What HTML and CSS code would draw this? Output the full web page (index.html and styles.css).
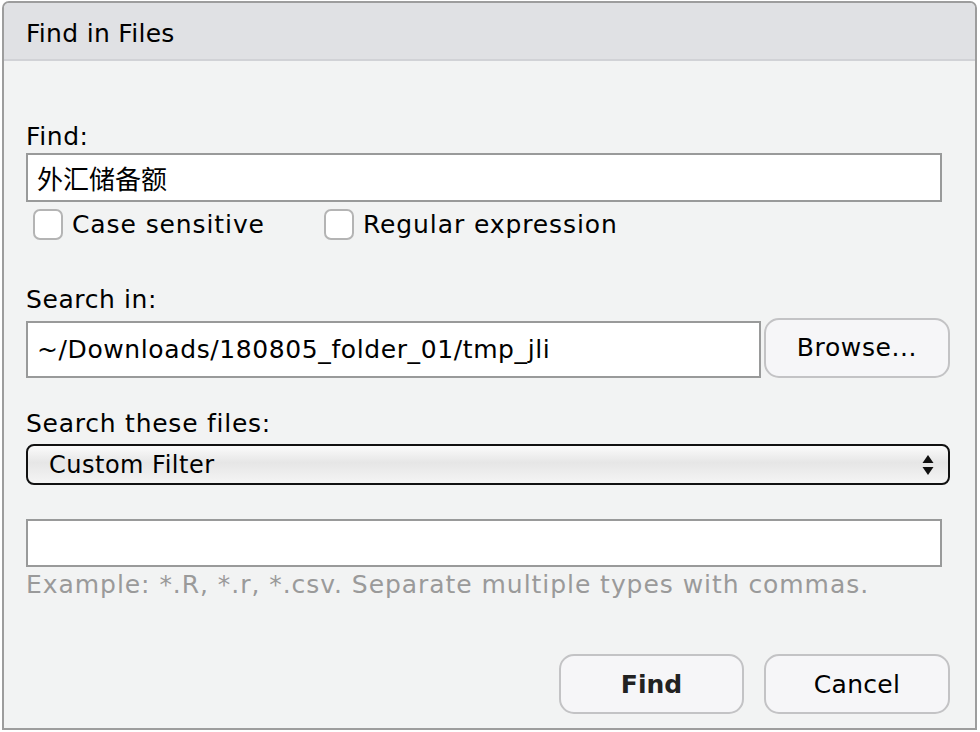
FILE: index.html
```html
<!DOCTYPE html>
<html>
<head>
<meta charset="utf-8">
<link rel="stylesheet" href="styles.css">
</head>
<body>
<div class="dialog">
  <div class="titlebar">Find in Files</div>
  <div class="content">
    <div class="label label-find">Find:</div>
    <div class="input input-find">外汇储备额</div>
    <div class="checks">
      <label class="check check-case"><span class="box"></span>Case sensitive</label>
      <label class="check"><span class="box"></span>Regular expression</label>
    </div>
    <div class="label label-search">Search in:</div>
    <div class="dir-row">
      <div class="input input-dir">~/Downloads/180805_folder_01/tmp_jli</div>
      <div class="btn btn-browse">Browse...</div>
    </div>
    <div class="label label-files">Search these files:</div>
    <div class="select">
      <span>Custom Filter</span>
      <svg class="arrows" width="12" height="22" viewBox="0 0 12 22"><path d="M6 1 L11.5 9 L0.5 9 Z M6 21 L11.5 13 L0.5 13 Z" fill="#111"/></svg>
    </div>
    <div class="input input-filter"></div>
    <div class="hint">Example: *.R, *.r, *.csv. Separate multiple types with commas.</div>
    <div class="actions">
      <div class="btn btn-find">Find</div>
      <div class="btn btn-cancel">Cancel</div>
    </div>
  </div>
</div>
</body>
</html>
```
FILE: styles.css
```css
html, body {
  margin: 0;
  padding: 0;
  background: #ffffff;
}
body {
  font-family: "DejaVu Sans", "Noto Sans CJK SC", sans-serif;
  font-size: 25px;
  color: #000;
  width: 980px;
  height: 732px;
  overflow: hidden;
  letter-spacing: 0.6px;
}
.dialog {
  margin: 1px 0 0 2px;
  width: 975px;
  height: 729px;
  box-sizing: border-box;
  border: 2px solid #9d9d9d;
  border-radius: 7px 7px 0 0;
  background: #f2f3f3;
  display: flex;
  flex-direction: column;
  overflow: hidden;
}
.titlebar {
  height: 58px;
  box-sizing: border-box;
  background: #e0e1e4;
  border-bottom: 2px solid #d1d2d6;
  padding: 16px 0 0 22px;
  font-size: 25px;
  line-height: 30px;
  letter-spacing: 0.3px;
}
.content {
  padding: 0 25px 0 22px;
  display: flex;
  flex-direction: column;
  flex: 1;
}
.label {
  line-height: 30px;
  height: 30px;
}
.label-find { margin-top: 61px; }
.label-files { letter-spacing: 0.75px; }
.input {
  background: #fff;
  border: 2px solid #999a9a;
  box-sizing: border-box;
  margin-right: 8px;
}
.input-find {
  margin-top: 1px;
  height: 49px;
  font-family: "Noto Sans CJK SC", sans-serif;
  font-size: 26px;
  line-height: 45px;
  padding-left: 9px;
  letter-spacing: 0;
}
.checks {
  display: flex;
  margin-top: 5px;
  height: 35px;
  align-items: center;
  padding-left: 7px;
  letter-spacing: 0.9px;
}
.check {
  display: flex;
  align-items: center;
}
.check-case { margin-right: 59px; }
.box {
  width: 30px;
  height: 31px;
  box-sizing: border-box;
  border: 2px solid #b4b4b4;
  border-radius: 7px;
  background: #fff;
  margin-right: 9px;
}
.label-search { margin-top: 43px; }
.dir-row {
  display: flex;
  margin-top: 3px;
  align-items: flex-end;
}
.input-dir {
  width: 735px;
  height: 57px;
  line-height: 53px;
  padding-left: 9px;
  margin-right: 3px;
}
.btn {
  box-sizing: border-box;
  border: 2px solid #c3c3c5;
  border-radius: 15px;
  background: #f6f6f8;
  display: flex;
  align-items: center;
  justify-content: center;
  height: 60px;
}
.btn-browse {
  width: 186px;
  padding-bottom: 2px;
}
.label-files { margin-top: 31px; }
.select {
  margin-top: 5px;
  height: 41px;
  box-sizing: border-box;
  border: 2px solid #111;
  border-radius: 8px;
  background: linear-gradient(#fbfbfb, #e6e6e6 45%, #f4f4f4);
  display: flex;
  align-items: center;
  justify-content: space-between;
  padding: 0 14px 0 21px;
  font-size: 24px;
  letter-spacing: 0.5px;
}
.arrows { display: block; }
.input-filter {
  margin-top: 34px;
  height: 48px;
}
.hint {
  color: #9a9a9a;
  line-height: 30px;
  margin-top: 3px;
  letter-spacing: 0.95px;
}
.actions {
  display: flex;
  justify-content: flex-end;
  margin-top: 54px;
  gap: 20px;
}
.btn-find {
  width: 185px;
  font-weight: bold;
  color: #222;
  letter-spacing: 0;
}
.btn-cancel {
  width: 186px;
  letter-spacing: 0.3px;
}
```
